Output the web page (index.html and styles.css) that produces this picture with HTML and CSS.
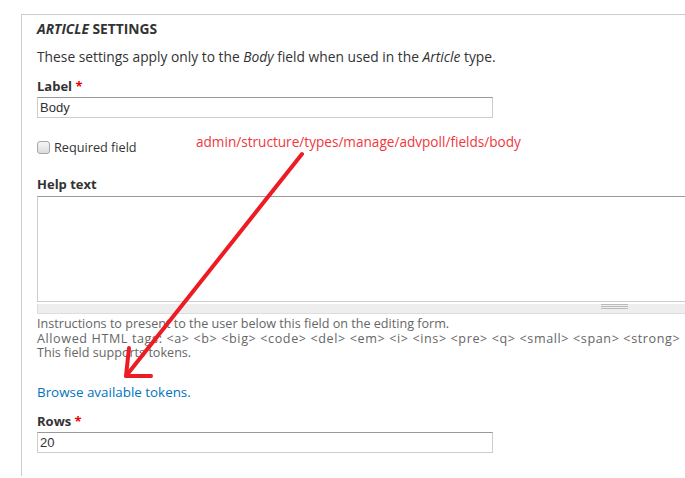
FILE: index.html
```html
<!DOCTYPE html>
<html>

<head>
    <meta charset="utf-8">
    <link rel="stylesheet" href="styles.css">
</head>

<body>

    <div class="page">
        <div class="fieldset">
            <div class="legend"><em>Article</em> settings</div>
            <p class="intro">These settings apply only to the <em>Body</em> field when used in the <em>Article</em> type.</p>

            <div class="form-item">
                <label for="edit-label">Label <span class="req">*</span></label>
                <input id="edit-label" class="form-text" type="text" value="Body">
            </div>

            <div class="form-check">
                <input id="edit-required" type="checkbox">
                <label for="edit-required">Required field</label>
            </div>

            <div class="form-item help">
                <label for="edit-help">Help text</label>
                <textarea id="edit-help" class="form-textarea"></textarea>
                <div class="grippie"></div>
                <div class="description">
                    Instructions to present to the user below this field on the editing form.<br>
                    <span class="tags">Allowed HTML tags: &lt;a&gt; &lt;b&gt; &lt;big&gt; &lt;code&gt; &lt;del&gt; &lt;em&gt; &lt;i&gt; &lt;ins&gt; &lt;pre&gt; &lt;q&gt; &lt;small&gt; &lt;span&gt; &lt;strong&gt;</span><br>
                    This field supports tokens.
                </div>
                <a class="tokens" href="#">Browse available tokens.</a>
            </div>

            <div class="form-item">
                <label for="edit-rows">Rows <span class="req">*</span></label>
                <input id="edit-rows" class="form-text" type="text" value="20">
            </div>
        </div>

        <!-- note with the path, and the arrow down to the tokens link -->
        <div class="note">admin/structure/types/manage/advpoll/fields/body</div>
        <svg class="arrow" width="685" height="478" viewBox="0 0 685 478">
            <g stroke="#ed1c24" stroke-width="4" stroke-linecap="round" stroke-linejoin="round" fill="none">
                <path d="M302 154 L126 376"/>
                <path d="M129 348 L126 376 L151 376"/>
            </g>
        </svg>
    </div>

</body>

</html>
```

FILE: styles.css
```css
html,
body {
    margin: 0;
    overflow: hidden;
}

body {
    font-family: "Open Sans", "DejaVu Sans", sans-serif;
    font-size: 13px;
    color: #333;
    background: #fff;
}

.page {
    position: relative;
    display: flow-root;
    height: 478px;
}

.fieldset {
    margin: 14px 0 0 21px;
    width: 720px;
    height: 462px;
    padding: 0 0 0 15px;
    border: 1px solid #ccc;
    border-bottom: none;
    box-sizing: border-box;
}

.legend {
    margin-top: 5px;
    line-height: 18px;
    font-size: 13.8px;
    font-weight: bold;
    text-transform: uppercase;
}

.intro {
    margin: 10px 0 0;
    line-height: 18px;
    font-size: 13.8px;
}

.form-item label,
.form-check label {
    display: block;
    line-height: 18px;
}

.form-item label {
    font-weight: bold;
}

.form-item {
    margin-top: 11px;
}

.req {
    color: #e00;
}

.form-text {
    display: block;
    box-sizing: border-box;
    width: 456px;
    height: 21px;
    margin: 2px 0 0;
    padding: 1px 2px;
    border: 1px solid #ccc;
    border-top-color: #999;
    font-family: "Liberation Sans", Arial, sans-serif;
    font-size: 13px;
    color: #333;
}

.form-check {
    display: flex;
    align-items: center;
    margin-top: 20px;
    height: 18px;
}

.form-check input {
    appearance: none;
    width: 13px;
    height: 13px;
    margin: 0 4px 0 0;
    border: 1px solid #a6a6a6;
    border-radius: 3px;
    background: linear-gradient(#f6f6f6, #dcdcdc);
    box-sizing: border-box;
}

.form-check label {
    font-size: 12.7px;
}

.form-item.help {
    margin-top: 19px;
}

.form-textarea {
    display: block;
    box-sizing: border-box;
    width: 700px;
    height: 106px;
    margin: 3px 0 0;
    border: 1px solid #ccc;
    border-top-color: #999;
    resize: none;
}

.grippie {
    width: 700px;
    height: 10px;
    box-sizing: border-box;
    background: #eee;
    border: 1px solid #ddd;
    border-top: none;
}

.grippie::after {
    content: "";
    display: block;
    width: 27px;
    height: 5px;
    margin: 2px 0 0 563px;
    box-sizing: border-box;
    border-top: 1px solid #bbb;
    border-bottom: 1px solid #bbb;
    background: linear-gradient(#bbb, #bbb) center / 100% 1px no-repeat;
}

.description {
    margin-top: 3px;
    font-size: 12.6px;
    line-height: 14.5px;
    color: #666;
    white-space: nowrap;
}

/* the tag list runs wider than the prose lines */
.description .tags {
    letter-spacing: 0.6px;
}

.tokens {
    display: inline-block;
    margin-top: 22px;
    line-height: 18px;
    font-size: 13.4px;
    color: #0074bd;
    text-decoration: none;
}

.note {
    position: absolute;
    left: 196px;
    top: 133px;
    line-height: 18px;
    font-size: 13.6px;
    color: #f0363c;
}

.arrow {
    position: absolute;
    left: 0;
    top: 0;
    pointer-events: none;
}
```
